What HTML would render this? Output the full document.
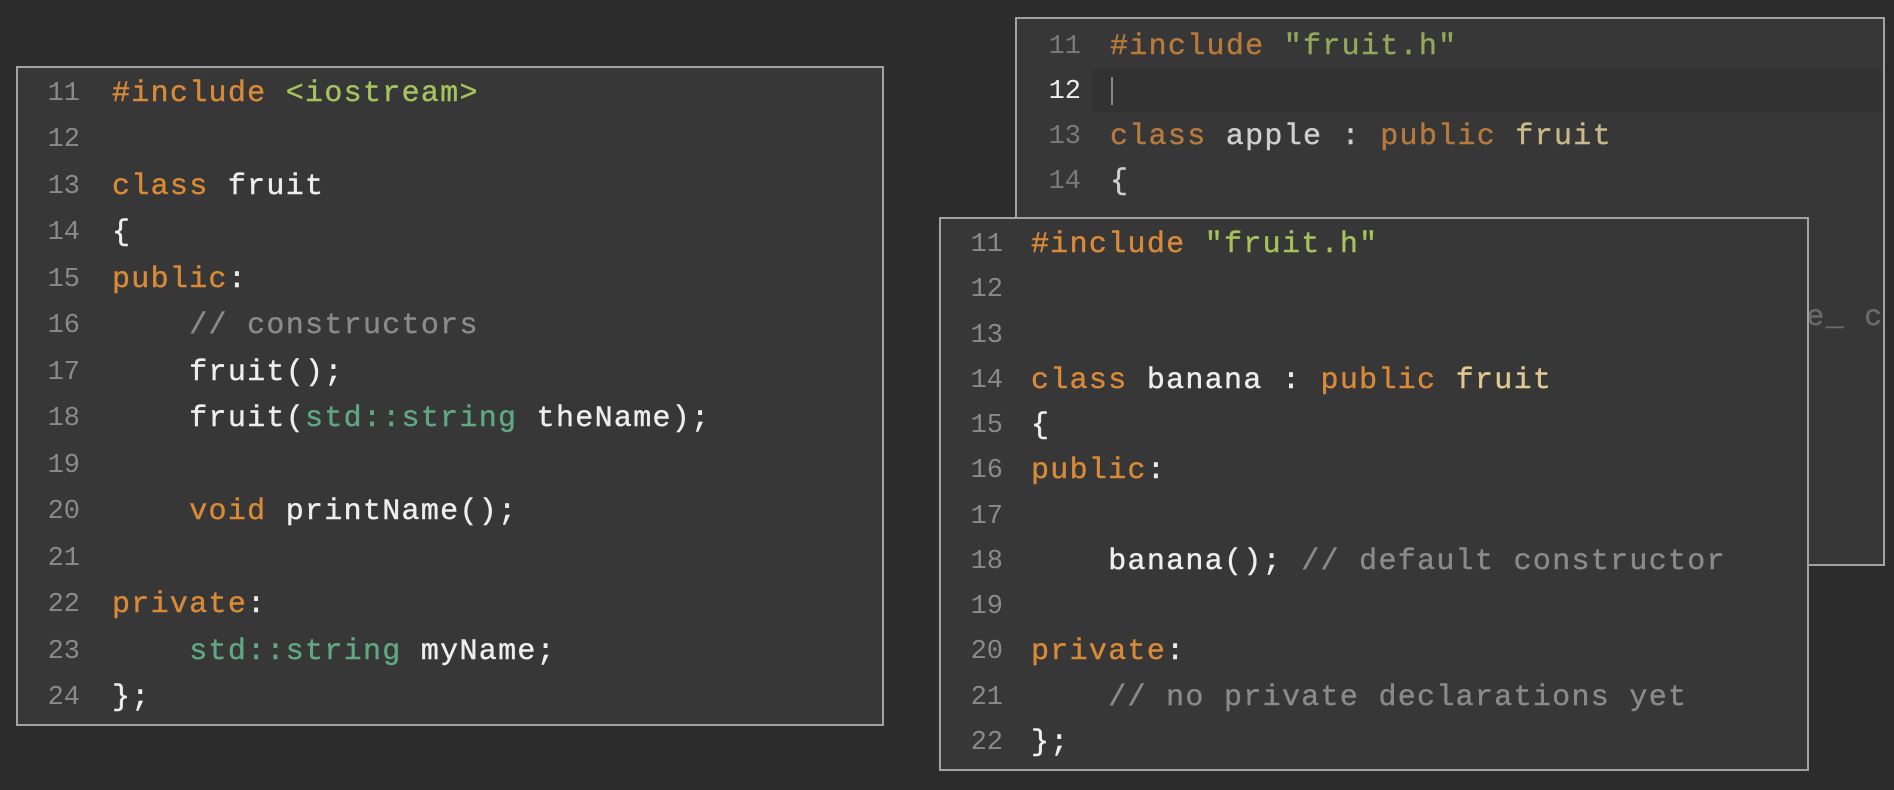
<!DOCTYPE html>
<html><head><meta charset="utf-8"><style>
html,body{margin:0;padding:0;background:#2c2c2c;width:1894px;height:790px;overflow:hidden;position:relative}
.p{position:absolute;background:#373737;border:2px solid #a3a3a3;box-sizing:border-box;overflow:hidden}
.l{position:absolute;left:0;white-space:pre;font-family:"Liberation Mono",monospace;font-size:30px;letter-spacing:1.3px;line-height:46px;color:#eeeeee;-webkit-text-stroke:0.4px currentColor}
.n{position:absolute;white-space:pre;font-family:"Liberation Mono",monospace;font-size:27px;line-height:46px;color:#8a8a8a;text-align:right;width:62px}
.k{color:#d98a37}.s{color:#a5c25c}.t{color:#5fa882}.c{color:#8a8a8a}.w{color:#eeeeee}
</style></head><body>

<div class="p" style="left:16px;top:66px;width:868px;height:660px">
<div class="n" style="left:0;top:3px">11</div><div class="l" style="left:94px;top:3px"><span class="k">#include</span> <span class="s">&lt;iostream&gt;</span></div>
<div class="n" style="left:0;top:49px">12</div>
<div class="n" style="left:0;top:96px">13</div><div class="l" style="left:94px;top:96px"><span class="k">class</span> fruit</div>
<div class="n" style="left:0;top:142px">14</div><div class="l" style="left:94px;top:142px">{</div>
<div class="n" style="left:0;top:189px">15</div><div class="l" style="left:94px;top:189px"><span class="k">public</span>:</div>
<div class="n" style="left:0;top:235px">16</div><div class="l" style="left:94px;top:235px"><span class="c">    // constructors</span></div>
<div class="n" style="left:0;top:282px">17</div><div class="l" style="left:94px;top:282px">    fruit();</div>
<div class="n" style="left:0;top:328px">18</div><div class="l" style="left:94px;top:328px">    fruit(<span class="t">std::string</span> theName);</div>
<div class="n" style="left:0;top:375px">19</div>
<div class="n" style="left:0;top:421px">20</div><div class="l" style="left:94px;top:421px">    <span class="k">void</span> printName();</div>
<div class="n" style="left:0;top:468px">21</div>
<div class="n" style="left:0;top:514px">22</div><div class="l" style="left:94px;top:514px"><span class="k">private</span>:</div>
<div class="n" style="left:0;top:561px">23</div><div class="l" style="left:94px;top:561px">    <span class="t">std::string</span> myName;</div>
<div class="n" style="left:0;top:607px">24</div><div class="l" style="left:94px;top:607px">};</div>
</div>

<div class="p" style="left:1015px;top:17px;width:870px;height:549px">
<div style="position:absolute;left:75px;top:50px;width:800px;height:43px;background:#323232"></div>
<div class="n" style="left:2px;top:5px;color:#7a7a7a">11</div><div class="l" style="left:93px;top:5px;color:#cfcfcf"><span style="color:#b77a3c">#include</span> <span style="color:#92a85a">"fruit.h"</span></div>
<div class="n" style="left:2px;top:50px;color:#eeeeee">12</div><div style="position:absolute;left:94px;top:58px;width:2px;height:28px;background:#888"></div>
<div class="n" style="left:2px;top:95px;color:#7a7a7a">13</div><div class="l" style="left:93px;top:95px;color:#cfcfcf"><span style="color:#b77a3c">class</span> apple : <span style="color:#b77a3c">public</span> <span style="color:#c9b98a">fruit</span></div>
<div class="n" style="left:2px;top:140px;color:#7a7a7a">14</div><div class="l" style="left:93px;top:140px;color:#cfcfcf">{</div>
<div class="l" style="left:770px;top:276px;color:#6a6a6a">re_ c</div>
</div>

<div class="p" style="left:939px;top:217px;width:870px;height:554px">
<div class="n" style="left:0;top:3px">11</div><div class="l" style="left:90px;top:3px"><span class="k">#include</span> <span class="s">"fruit.h"</span></div>
<div class="n" style="left:0;top:48px">12</div>
<div class="n" style="left:0;top:94px">13</div>
<div class="n" style="left:0;top:139px">14</div><div class="l" style="left:90px;top:139px"><span class="k">class</span> banana : <span class="k">public</span> <span style="color:#e0c890">fruit</span></div>
<div class="n" style="left:0;top:184px">15</div><div class="l" style="left:90px;top:184px">{</div>
<div class="n" style="left:0;top:229px">16</div><div class="l" style="left:90px;top:229px"><span class="k">public</span>:</div>
<div class="n" style="left:0;top:275px">17</div>
<div class="n" style="left:0;top:320px">18</div><div class="l" style="left:90px;top:320px">    banana(); <span class="c">// default constructor</span></div>
<div class="n" style="left:0;top:365px">19</div>
<div class="n" style="left:0;top:410px">20</div><div class="l" style="left:90px;top:410px"><span class="k">private</span>:</div>
<div class="n" style="left:0;top:456px">21</div><div class="l" style="left:90px;top:456px"><span class="c">    // no private declarations yet</span></div>
<div class="n" style="left:0;top:501px">22</div><div class="l" style="left:90px;top:501px">};</div>
</div>

</body></html>
